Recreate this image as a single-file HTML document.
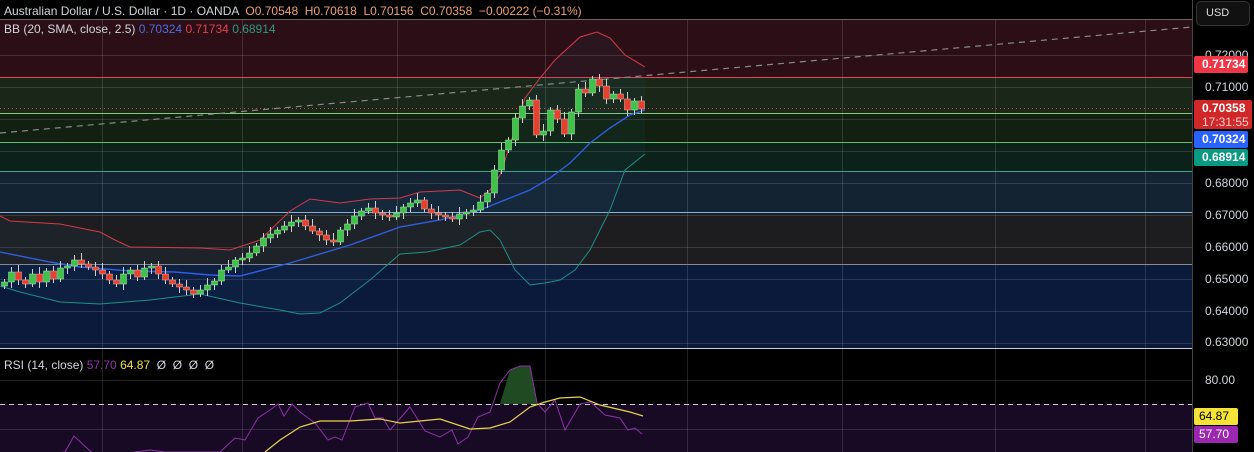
<!DOCTYPE html>
<html><head><meta charset="utf-8"><style>
body{margin:0;background:#000;width:1254px;height:452px;overflow:hidden;font-family:"Liberation Sans",sans-serif}
svg{position:absolute;left:0;top:0}
.t{position:absolute;font-size:12px;white-space:nowrap;color:#d1d4dc}
.ax{position:absolute;left:1205px;font-size:12px;color:#d1d4dc}
.bd{position:absolute;left:1194px;width:54px;font-size:12px;font-weight:bold;color:#fff;padding-left:8px;box-sizing:border-box;border-radius:2px;line-height:16px}
</style></head><body>
<svg width="1254" height="452" id="s">
<rect x="0" y="19" width="1192" height="58" fill="#2c0f16"/>
<rect x="0" y="77" width="1192" height="36" fill="#1a2618"/>
<rect x="0" y="113" width="1192" height="29" fill="#112010"/>
<rect x="0" y="142" width="1192" height="29" fill="#0c2119"/>
<rect x="0" y="171" width="1192" height="41" fill="#142332"/>
<rect x="0" y="212" width="1192" height="52" fill="#1d1d1f"/>
<rect x="0" y="264" width="1192" height="84" fill="#0b1a3b"/>
<rect x="0" y="404" width="1192" height="48" fill="#180a24"/>
<g stroke="#ffffff" stroke-opacity="0.13" stroke-width="1">
<path d="M0 55.5H1192M0 87.5H1192M0 119.5H1192M0 151.5H1192M0 183.5H1192M0 215.5H1192M0 247.5H1192M0 279.5H1192M0 311.5H1192M0 343.5H1192M0 380.5H1192M0 429.5H1192"/>
<path d="M102.5 19V452M242.5 19V452M397.5 19V452M545.5 19V452M687.5 19V452M842.5 19V452M995.5 19V452M1145.5 19V452"/>
</g>
<path d="M0 77.5H1192" stroke="#e0454f"/>
<path d="M0 113.5H1192" stroke="#7fcf7f"/>
<path d="M0 142.5H1192" stroke="#5cbf6c"/>
<path d="M0 171.5H1192" stroke="#3aa38c"/>
<path d="M0 212.5H1192" stroke="#7fb6e8"/>
<path d="M0 264.5H1192" stroke="#8a8a8a"/>
<path d="M0 108.5H1192" stroke="#e04040" stroke-dasharray="1 3"/>
<path d="M0 133L1192 27" stroke="#8a8a8a" stroke-width="1.2" stroke-dasharray="6 5"/>
<path d="M0 19.5H1192" stroke="#666"/>
<path d="M0 348.5H1192" stroke="#ccc"/>
<path d="M0 404.5H1192" stroke="#ccc" stroke-dasharray="5 4"/>
<path d="M1192.5 0V452" stroke="#444"/>
<g id="bb"></g>
<g id="cd"></g>
<path d="M500 404L510 370L520 366L530 366L537 404Z" fill="#1f4a22"/>
<polyline fill="none" stroke="#8e30a8" stroke-width="1" points="0,460 65,452 74,436 89,450 100,460 135,452 150,450 165,452 220,452 235,438 245,440 258,418 270,410 278,404 284,416 292,404 300,412 315,423 328,440 335,437 342,440 355,407 368,403 375,418 383,418 390,430 410,407 425,431 440,437 452,430 458,444 468,437 478,417 490,412 500,383 510,370 520,366 530,366 537,403 545,412 555,400 565,430 580,404 590,402 595,406 605,415 620,418 628,430 635,428 642,434"/>
<polyline fill="none" stroke="#e8d44d" stroke-width="1.2" points="265,452 280,440 300,427 320,421 350,421 380,419 400,423 440,419 470,429 490,428 510,422 530,407 545,402 560,398 580,397 600,405 630,412 643,416"/>
</svg>
<div class="t" style="left:4px;top:4px">Australian Dollar / U.S. Dollar · 1D · OANDA <span style="color:#f0a070">&nbsp;O0.70548 &nbsp;H0.70618 &nbsp;L0.70156 &nbsp;C0.70358 &nbsp;−0.00222 (−0.31%)</span></div>
<div class="t" style="left:4px;top:22px">BB (20, SMA, close, 2.5) <span style="color:#4a6ee0">0.70324</span> <span style="color:#e04050">0.71734</span> <span style="color:#2a9a80">0.68914</span></div>
<div class="t" style="left:4px;top:358px">RSI (14, close) <span style="color:#9c2fb0">57.70</span> <span style="color:#f0e040">64.87</span> &nbsp;Ø &nbsp;Ø &nbsp;Ø &nbsp;Ø</div>
<div style="position:absolute;left:1196px;top:1px;width:54px;height:25px;border:1px solid #333;border-radius:5px;background:#111;box-sizing:border-box;color:#ddd;font-size:11px;line-height:23px;padding-left:9px">USD</div>
<div class="ax" style="top:48px">0.72000</div>
<div class="ax" style="top:80px">0.71000</div>
<div class="ax" style="top:176px">0.68000</div>
<div class="ax" style="top:208px">0.67000</div>
<div class="ax" style="top:240px">0.66000</div>
<div class="ax" style="top:272px">0.65000</div>
<div class="ax" style="top:304px">0.64000</div>
<div class="ax" style="top:335px">0.63000</div>
<div class="ax" style="top:373px">80.00</div>
<div class="bd" style="top:56px;background:#f23645;height:17px">0.71734</div>
<div class="bd" style="top:100px;background:#d02828;height:29px;line-height:14px;padding-top:1px;width:58px">0.70358<br><span style="font-weight:normal;color:#fcc">17:31:55</span></div>
<div class="bd" style="top:131px;background:#2962ff;height:17px">0.70324</div>
<div class="bd" style="top:149px;background:#089981;height:17px">0.68914</div>
<div class="bd" style="top:408px;background:#f5e33a;color:#000;font-weight:normal;height:17px;width:44px;padding-left:5px">64.87</div>
<div class="bd" style="top:426px;background:#9c27b0;font-weight:normal;height:17px;width:44px;padding-left:5px">57.70</div>
<script>
var NS="http://www.w3.org/2000/svg";
function pl(pts,c,g,w){var p=document.createElementNS(NS,"polyline");p.setAttribute("points",pts.map(a=>a.join(",")).join(" "));p.setAttribute("fill","none");p.setAttribute("stroke",c);p.setAttribute("stroke-width",w||1);g.appendChild(p);}
var up=[[0,216],[10,221],[60,224],[100,232],[115,240],[130,247],[200,248],[230,250],[260,240],[290,211],[310,199],[340,203],[370,199],[400,198],[420,192],[460,190],[480,198],[490,190],[500,175],[510,145],[525,98],[540,78],[555,60],[580,37],[597,32],[610,38],[625,55],[645,67]];
var md=[[0,252],[50,262],[80,267],[130,271],[175,272],[210,275],[240,276],[290,263],[350,245],[400,227],[440,220],[480,210],[510,198],[530,190],[550,178],[570,163],[590,143],[610,128],[630,115],[645,110]];
var lo=[[0,286],[20,292],[60,302],[100,304],[150,300],[200,294],[240,303],[280,310],[300,314],[320,313],[340,303],[370,280],[400,254],[427,252],[460,245],[480,232],[490,230],[500,240],[515,270],[530,285],[545,283],[560,280],[575,270],[590,250],[610,210],[625,170],[645,154]];
var bb=document.getElementById("bb");
var f=document.createElementNS(NS,"polygon");f.setAttribute("points",up.concat(lo.slice().reverse()).map(a=>a.join(",")).join(" "));f.setAttribute("fill","#2a6f9a");f.setAttribute("fill-opacity","0.08");bb.appendChild(f);
pl(up,"#d33a4a",bb);pl(md,"#2f5ee0",bb,1.4);pl(lo,"#1f8f86",bb);
var c=[282,272,280,284,274,282,271,279,268,266,260,264,267,270,274,280,284,274,270,277,268,266,274,280,284,287,290,294,290,285,281,270,267,260,258,253,246,238,234,230,226,222,220,226,231,235,240,242,230,224,216,211,208,213,215,217,213,207,203,200,209,213,215,217,219,214,212,210,202,193,170,150,140,118,106,100,135,131,110,119,134,112,89,93,79,86,99,94,99,110,101,109];
var cd=document.getElementById("cd"),prev=286;
c.forEach(function(y,i){var x=4+7*i,o=prev;prev=y;var g=y<o,t=Math.min(o,y),b=Math.max(o,y);if(b-t<2){b=t+2}
var col=g?"#3fc24a":"#e8402e";var wt=t-3-(i%3)*2,wb=b+3+((i*7)%4);
var l=document.createElementNS(NS,"line");l.setAttribute("x1",x+0.5);l.setAttribute("x2",x+0.5);l.setAttribute("y1",wt);l.setAttribute("y2",wb);l.setAttribute("stroke","#cfcfcf");cd.appendChild(l);
var r=document.createElementNS(NS,"rect");r.setAttribute("x",x-2.5);r.setAttribute("y",t);r.setAttribute("width",6);r.setAttribute("height",b-t);r.setAttribute("fill",col);r.setAttribute("stroke",g?"#a8e8a8":"#f0b0a0");r.setAttribute("stroke-width","0.5");cd.appendChild(r);});
</script>
</body></html>
